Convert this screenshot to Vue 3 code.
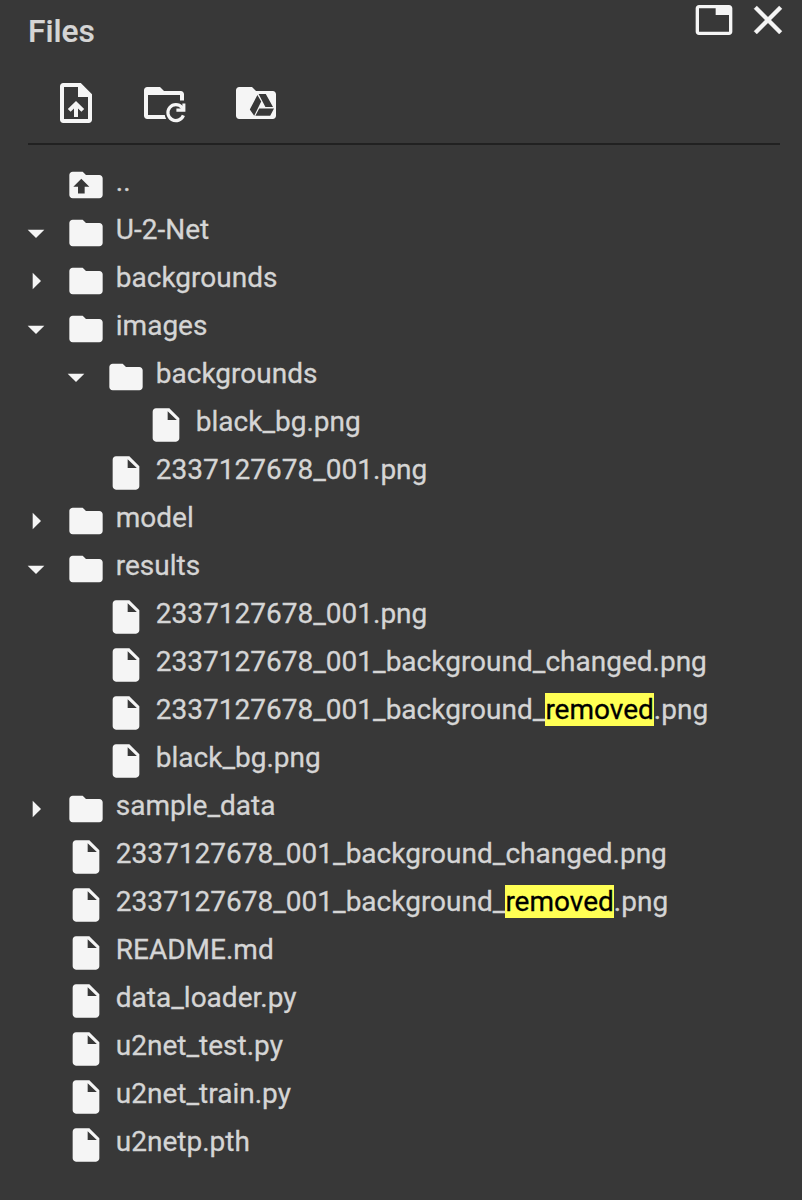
<script setup>
const rows = [
  { level: 0, icon: 'up', parts: ['..'] },
  { level: 0, icon: 'folder', open: true, parts: ['U-2-Net'] },
  { level: 0, icon: 'folder', open: false, parts: ['backgrounds'] },
  { level: 0, icon: 'folder', open: true, parts: ['images'] },
  { level: 1, icon: 'folder', open: true, parts: ['backgrounds'] },
  { level: 2, icon: 'file', parts: ['black_bg.png'] },
  { level: 1, icon: 'file', parts: ['2337127678_001.png'] },
  { level: 0, icon: 'folder', open: false, parts: ['model'] },
  { level: 0, icon: 'folder', open: true, parts: ['results'] },
  { level: 1, icon: 'file', parts: ['2337127678_001.png'] },
  { level: 1, icon: 'file', parts: ['2337127678_001_background_changed.png'] },
  { level: 1, icon: 'file', parts: ['2337127678_001_background_', 'removed', '.png'] },
  { level: 1, icon: 'file', parts: ['black_bg.png'] },
  { level: 0, icon: 'folder', open: false, parts: ['sample_data'] },
  { level: 0, icon: 'file', parts: ['2337127678_001_background_changed.png'] },
  { level: 0, icon: 'file', parts: ['2337127678_001_background_', 'removed', '.png'] },
  { level: 0, icon: 'file', parts: ['README.md'] },
  { level: 0, icon: 'file', parts: ['data_loader.py'] },
  { level: 0, icon: 'file', parts: ['u2net_test.py'] },
  { level: 0, icon: 'file', parts: ['u2net_train.py'] },
  { level: 0, icon: 'file', parts: ['u2netp.pth'] },
]
const folder = 'M10 4H4c-1.1 0-2 .9-2 2v12c0 1.1.9 2 2 2h16c1.1 0 2-.9 2-2V8c0-1.1-.9-2-2-2h-8l-2-2z'
const paths = {
  folder,
  up: folder + 'M9.2 8.2L14 13.1h-2.8v4H7.2v-4H4.4z',
  file: 'M6 2c-1.1 0-2 .9-2 2v16c0 1.1.9 2 2 2h12c1.1 0 2-.9 2-2V8l-6-6H6zM13 3.7L18.5 9H13z',
}
</script>

<template>
  <main class="panel">
    <header class="header">
      <h1 class="title">Files</h1>
      <div class="window-actions">
        <svg class="tab-icon" viewBox="0 0 24 24"><path d="M21 3H3c-1.1 0-2 .9-2 2v14c0 1.1.9 2 2 2h18c1.1 0 2-.9 2-2V5c0-1.1-.9-2-2-2zm0 16H3V5h10v4h8v10z" /></svg>
        <svg class="close-icon" viewBox="0 0 24 24"><path d="M19 6.41L17.59 5 12 10.59 6.41 5 5 6.41 10.59 12 5 17.59 6.41 19 12 13.41 17.59 19 19 17.59 13.41 12z" /></svg>
      </div>
    </header>
    <nav class="toolbar">
      <svg viewBox="0 0 24 24"><path fill-rule="evenodd" d="M5.6 2h8.8L20 7.6v12.8c0 .9-.7 1.6-1.6 1.6H5.6c-.9 0-1.6-.7-1.6-1.6V3.6c0-.9.7-1.6 1.6-1.6zM6 4v16h12V9h-5V4z" /><path d="M12 11l4.1 4-1.4 1.4-1.7-1.7V19h-2v-4.3l-1.7 1.7L7.9 15z" /></svg>
      <svg viewBox="0 0 24 24">
        <path d="M20.4 6H12l-2-2H3.6C2.7 4 2 4.7 2 5.6v12.8c0 .9.7 1.6 1.6 1.6h9.5c-.4-.6-.6-1.3-.7-2H4V8h16v2.8h2V7.6c0-.9-.7-1.6-1.6-1.6z" />
        <path class="ring" d="M21.7 18.2A4 4 0 1 1 21 14.2" />
        <path d="M21.2 13.5V12.2h1.5v4.2h-4.5v-1.6h2z" />
      </svg>
      <svg viewBox="0 0 24 24"><path fill-rule="evenodd" d="M20.4 6H12l-2-2H3.6C2.7 4 2 4.7 2 5.6v12.8c0 .9.7 1.6 1.6 1.6h16.8c.9 0 1.6-.7 1.6-1.6V7.6c0-.9-.7-1.6-1.6-1.6zM12.7 8l1.9 3.2-3.5 7.2-2.2-3.1zM13.3 7.5h3.6l3.6 6.5h-3.8zM13.6 14.7h7.4l-1.9 3.7h-7.4z" /></svg>
    </nav>
    <ul class="tree">
      <li v-for="(row, i) in rows" :key="i" class="row" :class="'level-' + row.level">
        <svg class="icon" viewBox="0 0 24 24">
          <path v-if="row.open === true" d="M7 10l5 5 5-5z" />
          <path v-if="row.open === false" d="M10 17l5-5-5-5z" />
        </svg>
        <svg class="icon kind" viewBox="0 0 24 24"><path fill-rule="evenodd" :d="paths[row.icon]" /></svg>
        <span class="name">{{ row.parts[0] }}<mark v-if="row.parts[1]">{{ row.parts[1] }}</mark>{{ row.parts[2] }}</span>
      </li>
    </ul>
  </main>
</template>

<style>
body {
  background: #383838;
}
</style>

<style scoped>
.panel {
  box-sizing: border-box;
  height: 1200px;
  overflow: hidden;
  background: #383838;
  color: #d5d5d5;
  font-family: Roboto, sans-serif;
}
svg {
  display: block;
  flex: none;
  fill: #f5f5f5;
}
.header {
  display: flex;
  justify-content: space-between;
  height: 63px;
  padding: 0 10px 0 28px;
}
.title {
  margin: 0;
  font-size: 31.7px;
  font-weight: 500;
  line-height: 64px;
  -webkit-text-stroke: 0.2px;
}
.window-actions {
  display: flex;
  align-items: center;
  gap: 10px;
  height: 40px;
}
.tab-icon {
  width: 40px;
  height: 40px;
}
.close-icon {
  width: 48px;
  height: 48px;
  stroke: #f5f5f5;
  stroke-width: 0.2;
  stroke-linejoin: round;
}
.toolbar {
  display: flex;
  align-items: center;
  box-sizing: border-box;
  height: 82px;
  margin: 0 22px 0 28px;
  padding: 0 0 0 24px;
  gap: 42px;
  border-bottom: 2px solid #212121;
}
.toolbar svg {
  width: 48px;
  height: 48px;
}
.toolbar svg:first-child {
  margin-right: -2px;
}
.toolbar svg:last-child {
  margin-left: 2px;
}
.ring {
  fill: none;
  stroke: #f5f5f5;
  stroke-width: 1.6;
}
.tree {
  margin: 0;
  padding: 12px 0 0;
  list-style: none;
}
.row {
  display: flex;
  align-items: center;
  height: 48px;
  padding-left: 16px;
}
.level-1 {
  padding-left: 56px;
}
.level-2 {
  padding-left: 96px;
}
.icon {
  width: 40px;
  height: 40px;
  margin-top: 8px;
}
.kind {
  margin-left: 10px;
}
.name {
  margin: 2px 0 0 9.8px;
  font-size: 28px;
  line-height: 46px;
  white-space: nowrap;
  -webkit-text-stroke: 0.3px;
}
mark {
  background: #ffff54;
  color: #000;
}
</style>
